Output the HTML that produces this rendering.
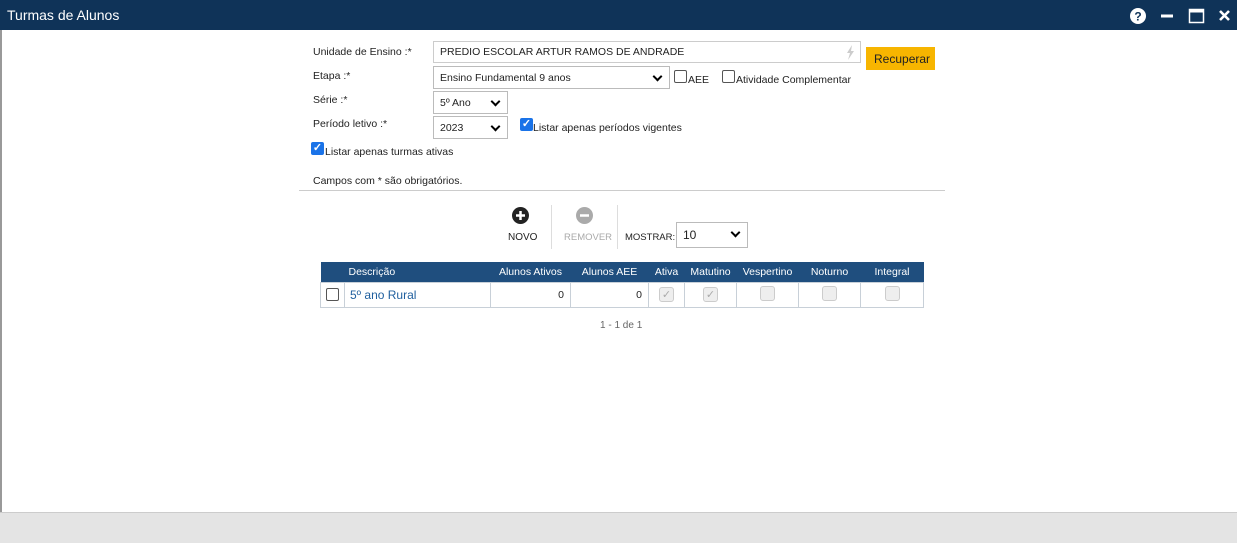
<!DOCTYPE html>
<html><head><meta charset="utf-8"><style>
*{box-sizing:border-box;margin:0;padding:0}
body{width:1237px;height:543px;position:relative;background:#fff;font-family:"Liberation Sans",sans-serif;font-size:10.5px;color:#222;overflow:hidden}
.a{position:absolute;white-space:nowrap}
.top{left:0;top:0;width:1237px;height:30px;background:#0f3358;color:#fff;font-size:14px;padding:7px 0 0 7px}
.bot{left:0;top:512px;width:1237px;height:31px;background:#e4e4e4;border-top:1px solid #ccc}
.inp{border:1px solid #ccc;background:#fff;height:22px;padding:4px 6px;font-size:10.5px}
.sel{border:1px solid #bbb;background:#fff;height:23px;padding:5px 6px;font-size:10.5px}
.sel:after{content:"";position:absolute;right:8px;top:6px;width:5px;height:5px;border-right:2px solid #000;border-bottom:2px solid #000;transform:rotate(45deg)}
.cb{width:13px;height:13px;border:1px solid #555;border-radius:2px;background:#fff}
.cbc{width:13px;height:13px;border-radius:2px;background:#1a73e8;color:#fff;font-size:11px;line-height:13px;text-align:center;font-weight:bold}
table{border-collapse:collapse;position:absolute;left:320px;top:262px;width:604px;font-size:10.5px}
th{background:#1f4e7e;color:#fff;font-weight:normal;height:20px;text-align:center;padding:0 4px}
td{border:1px solid #c8d0d8;height:25px;text-align:center}
.dis{display:inline-block;width:15px;height:15px;border:1px solid #ccc;border-radius:3px;background:#eee;color:#aaa;font-size:11px;line-height:14px}
</style></head><body>
<div class="a top">Turmas de Alunos</div>
<svg class="a" style="left:1130px;top:8px" width="100" height="16">
<circle cx="8" cy="8" r="8" fill="#fff"/><text x="8" y="12.5" font-size="12" font-weight="bold" text-anchor="middle" fill="#0f3358" font-family="Liberation Sans">?</text>
<rect x="31" y="6.5" width="12" height="3" fill="#fff"/>
<rect x="59.5" y="1.5" width="14" height="13" fill="none" stroke="#fff" stroke-width="1.5"/><rect x="59.5" y="1.5" width="14" height="3" fill="#fff"/>
<path d="M90 3l9 9M99 3l-9 9" stroke="#fff" stroke-width="2.6"/>
</svg>
<div class="a" style="left:0;top:30px;width:2px;height:482px;background:#999"></div>

<div class="a" style="left:313px;top:46px">Unidade de Ensino :*</div>
<div class="a inp" style="left:433px;top:41px;width:428px">PREDIO ESCOLAR ARTUR RAMOS DE ANDRADE<svg style="position:absolute;right:5px;top:3px" width="9" height="15"><path d="M6 0L1 8h3l-2 7 6-9H5z" fill="#ccc"/></svg></div>
<div class="a" style="left:866px;top:47px;width:69px;height:23px;background:#f7b500;font-size:12px;padding:5px 0 0 8px">Recuperar</div>

<div class="a" style="left:313px;top:70px">Etapa :*</div>
<div class="a sel" style="left:433px;top:66px;width:237px">Ensino Fundamental 9 anos</div>
<div class="a cb" style="left:674px;top:70px"></div><div class="a" style="left:688px;top:74px">AEE</div>
<div class="a cb" style="left:722px;top:70px"></div><div class="a" style="left:736px;top:74px">Atividade Complementar</div>

<div class="a" style="left:313px;top:94px">Série :*</div>
<div class="a sel" style="left:433px;top:91px;width:75px">5º Ano</div>

<div class="a" style="left:313px;top:118px">Período letivo :*</div>
<div class="a sel" style="left:433px;top:116px;width:75px">2023</div>
<div class="a cbc" style="left:520px;top:118px">✓</div><div class="a" style="left:533px;top:122px">Listar apenas períodos vigentes</div>

<div class="a cbc" style="left:311px;top:142px">✓</div><div class="a" style="left:325px;top:146px">Listar apenas turmas ativas</div>

<div class="a" style="left:313px;top:175px">Campos com * são obrigatórios.</div>
<div class="a" style="left:299px;top:190px;width:646px;height:1px;background:#ccc"></div>

<svg class="a" style="left:512px;top:207px" width="17" height="17"><circle cx="8.5" cy="8.5" r="8.5" fill="#222"/><path d="M8.5 4v9M4 8.5h9" stroke="#fff" stroke-width="2.5"/></svg>
<div class="a" style="left:508px;top:232px;font-size:10px">NOVO</div>
<div class="a" style="left:551px;top:205px;width:1px;height:44px;background:#ddd"></div>
<svg class="a" style="left:576px;top:207px" width="17" height="17"><circle cx="8.5" cy="8.5" r="8.5" fill="#aaa"/><path d="M4 8.5h9" stroke="#fff" stroke-width="2.5"/></svg>
<div class="a" style="left:564px;top:232px;font-size:9.5px;color:#aaa">REMOVER</div>
<div class="a" style="left:617px;top:205px;width:1px;height:44px;background:#ddd"></div>
<div class="a" style="left:625px;top:232px;font-size:9.5px">MOSTRAR:</div>
<div class="a sel" style="left:676px;top:222px;width:72px;height:26px;font-size:12px">10</div>

<table>
<tr><th style="width:24px"></th><th style="text-align:left;width:146px">Descrição</th><th style="width:80px">Alunos Ativos</th><th style="width:78px">Alunos AEE</th><th style="width:36px">Ativa</th><th style="width:52px">Matutino</th><th style="width:62px">Vespertino</th><th style="width:62px">Noturno</th><th>Integral</th></tr>
<tr><td><span class="cb" style="display:inline-block;vertical-align:middle"></span></td><td style="text-align:left;color:#1f5f9e;padding-left:5px;font-size:12px">5º ano Rural</td><td style="text-align:right;padding-right:6px">0</td><td style="text-align:right;padding-right:6px">0</td><td><span class="dis">✓</span></td><td><span class="dis">✓</span></td><td><span class="dis"></span></td><td><span class="dis"></span></td><td><span class="dis"></span></td></tr>
</table>
<div class="a" style="left:600px;top:320px;color:#666;font-size:10px">1 - 1 de 1</div>
<div class="a bot"></div>
</body></html>
